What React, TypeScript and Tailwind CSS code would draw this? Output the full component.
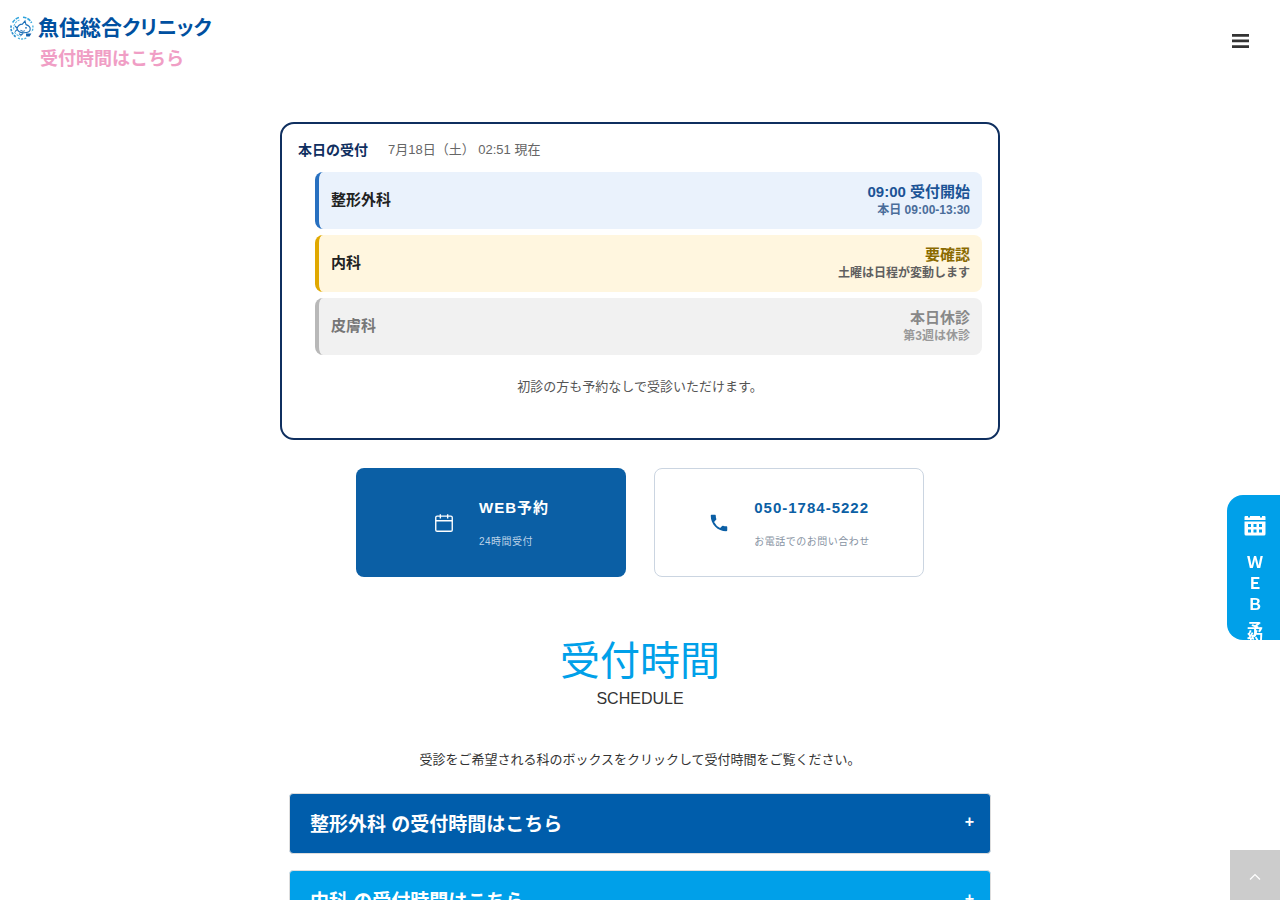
import { useState } from 'react';

type Status = 'before' | 'check' | 'closed';

interface Department {
  name: string;
  status: Status;
  label: string;
  note: string;
}

const departments: Department[] = [
  { name: '整形外科', status: 'before', label: '09:00 受付開始', note: '本日 09:00-13:30' },
  { name: '内科', status: 'check', label: '要確認', note: '土曜は日程が変動します' },
  { name: '皮膚科', status: 'closed', label: '本日休診', note: '第3週は休診' },
];

const statusStyles: Record<Status, { row: string; name: string; label: string; note: string }> = {
  before: {
    row: 'border-[#2770c0] bg-[#eaf2fc]',
    name: 'text-[#222222]',
    label: 'text-[#1c5496]',
    note: 'text-[#4a6d9a]',
  },
  check: {
    row: 'border-[#e0a800] bg-[#fff6df]',
    name: 'text-[#222222]',
    label: 'text-[#8a6a00]',
    note: 'text-[#5f5f5f]',
  },
  closed: {
    row: 'border-[#b8b8b8] bg-[#f1f1f1]',
    name: 'text-[#777777]',
    label: 'text-[#888888]',
    note: 'text-[#999999]',
  },
};

const schedules = [
  { name: '整形外科', color: 'bg-[#005dab]' },
  { name: '内科', color: 'bg-[#00a0e9]' },
];

function LogoMark() {
  return (
    <svg viewBox="0 0 24 24" className="h-6 w-6" fill="none" aria-hidden="true">
      {/* 波の輪 */}
      <path d="M2.600 6.500A11 11 0 0 1 9 1.500M13 1.200a11 11 0 0 1 8.600 5.600" stroke="#2fa3dc" strokeWidth="1.600" strokeDasharray="3.600 1" />
      <path d="M1.200 9.500a11 11 0 0 0 4.600 11.300" stroke="#2b8fce" strokeWidth="1.600" strokeDasharray="2.400 1" />
      <path d="M8 22.200a11 11 0 0 0 9-.4M22.800 9.500a11 11 0 0 1-1 6.500" stroke="#4bb3e0" strokeWidth="1.400" strokeDasharray="2 1.200" />
      <path d="M3.800 13.500A8.500 8.500 0 0 1 9.500 4M4.500 16a8.500 8.500 0 0 0 6 4.200" stroke="#5bbce6" strokeWidth="1.100" strokeDasharray="2.400 .9" />
      {/* 魚 */}
      <path d="M7 12.500c1-3 3-4.300 5.400-4.400L15 5l1 3.600c2.600.8 4.200 2.400 4.200 4.400 0 2.600-2.900 3.800-6.200 3.800-3.400 0-6.200-1.300-7-4.300Z" stroke="#1b6fb8" strokeWidth="1.100" />
      <path d="m7 12-2-2M7 13.600l-2 2M10.500 14c1.200 1.400 3 1.500 4.400.6M9 17.600l2 1.600 2.200-1.800" stroke="#1b6fb8" strokeWidth="1.100" />
      <circle cx="16" cy="11.800" r=".9" fill="#1b6fb8" />
      <path d="M16 17.600h5.400L19.600 20.400h-3.400z" fill="#1463ae" />
    </svg>
  );
}

function Header() {
  return (
    <header className="flex items-start justify-between pl-[10px] pr-[31px]">
      <div className="pt-4">
        <a href="#top" className="flex h-6 items-center gap-[4px] text-[21px] font-bold text-[#0050a0]">
          <LogoMark />
          <span className="whitespace-nowrap leading-6 [font-feature-settings:'palt']">
            魚住総合<span className="text-xl leading-6">クリニック</span>
          </span>
        </a>
        <a href="#schedule" className="ml-[30px] mt-[6px] block text-lg font-bold leading-[27px] text-[#f09ec5]">
          受付時間はこちら
        </a>
      </div>
      <button type="button" aria-label="メニュー" className="mt-[34px] text-[#333333]">
        <svg viewBox="0 0 17 14" className="h-[14px] w-[17px]" fill="currentColor">
          <path d="M0 0h17v2.700H0zM0 5.600h17v2.700H0zM0 11.300h17v2.700H0z" />
        </svg>
      </button>
    </header>
  );
}

function TodayCard() {
  return (
    <section className="rounded-[14px] border-2 border-[#0f2f5f] px-4 pb-[39px] pt-[15px]">
      <div className="flex items-center gap-5 leading-[22px]">
        <h2 className="text-sm font-bold leading-[22px] text-[#0f2f5f]">本日の受付</h2>
        <p className="text-[13px] text-[#666666]">7月18日（土） 02:51 現在</p>
      </div>
      <ul className="ml-[17px] mt-[11px] flex flex-col gap-[6px]">
        {departments.map((dept) => {
          const style = statusStyles[dept.status];
          return (
            <li
              key={dept.name}
              className={`flex items-center justify-between rounded-lg border-l-4 px-3 py-[10px] font-bold ${style.row}`}
            >
              <span className={`text-[15px] ${style.name}`}>{dept.name}</span>
              <span className="flex flex-col items-end">
                <span className={`text-[15px] leading-5 ${style.label}`}>{dept.label}</span>
                <span className={`text-xs leading-[17px] ${style.note}`}>{dept.note}</span>
              </span>
            </li>
          );
        })}
      </ul>
      <p className="mt-[20px] text-center text-[13px] leading-6 text-[#555555]">初診の方も予約なしで受診いただけます。</p>
    </section>
  );
}

function ContactButtons() {
  return (
    <div className="mt-7 flex flex-wrap justify-center gap-7">
      <a
        href="#reserve"
        className="flex h-[109px] w-[270px] items-center justify-center gap-6 rounded-lg bg-[#0b5fa5] text-white"
      >
        <svg viewBox="0 0 24 24" className="h-[22px] w-[22px]" fill="none" stroke="currentColor" strokeWidth="1.5">
          <rect x="3" y="4.5" width="18" height="16.5" rx="1.5" />
          <path d="M3 9.500h18M8 2.500V7M16 2.500V7" />
        </svg>
        <span className="flex flex-col gap-[14px]">
          <span className="text-[15px] font-bold leading-6 tracking-[1px]">WEB予約</span>
          <span className="text-[10px] leading-4 tracking-wider text-[#bcd3e8]">24時間受付</span>
        </span>
      </a>
      <a
        href="tel:050-1784-5222"
        className="flex h-[109px] w-[270px] items-center justify-center gap-6 rounded-lg border border-[#cbd5e1] bg-white text-[#0b5fa5]"
      >
        <svg viewBox="0 0 24 24" className="h-[22px] w-[22px]" fill="currentColor">
          <path d="M20 15.5c-1.25 0-2.45-.2-3.57-.57a1.02 1.02 0 0 0-1.02.24l-2.2 2.2a15.05 15.05 0 0 1-6.59-6.58l2.2-2.21c.28-.27.36-.66.25-1.01A11.36 11.36 0 0 1 8.5 4c0-.55-.45-1-1-1H4c-.55 0-1 .45-1 1 0 9.39 7.61 17 17 17 .55 0 1-.45 1-1v-3.5c0-.55-.45-1-1-1z" />
        </svg>
        <span className="flex flex-col gap-[14px]">
          <span className="text-[15px] font-bold leading-6 tracking-[1px]">050-1784-5222</span>
          <span className="text-[10px] leading-4 tracking-wider text-[#8793a3]">お電話でのお問い合わせ</span>
        </span>
      </a>
    </div>
  );
}

function Schedule() {
  const [opened, setOpened] = useState<string | null>(null);

  return (
    <section id="schedule" className="mt-[54px] px-[9px]">
      <div className="text-center">
        <h2 className="text-[40px] leading-[60px] text-[#00a0e9]">受付時間</h2>
        <p className="text-base leading-4 text-[#333333]">SCHEDULE</p>
      </div>
      <p className="mt-[41px] text-center text-[13px] leading-6 text-[#333333]">
        受診をご希望される科のボックスをクリックして受付時間をご覧ください。
      </p>
      <div className="mt-[21px] flex flex-col gap-4">
        {schedules.map((item) => (
          <button
            key={item.name}
            type="button"
            aria-expanded={opened === item.name}
            onClick={() => setOpened(opened === item.name ? null : item.name)}
            className={`flex h-[61px] items-center justify-between rounded border border-[#dddddd] pl-5 pr-4 text-left font-bold text-white ${item.color}`}
          >
            <span className="pt-[3px] text-[19px]">{item.name} の受付時間はこちら</span>
            <span className="pb-1 text-base leading-6">{opened === item.name ? '−' : '+'}</span>
          </button>
        ))}
      </div>
    </section>
  );
}

function ReserveTab() {
  return (
    <a
      href="#reserve"
      aria-label="WEB予約"
      className="fixed right-0 top-[495px] flex h-[145px] w-[53px] flex-col items-center overflow-hidden rounded-l-2xl bg-[#00a0e9] pl-[3px] pt-5 text-base font-bold text-white"
    >
      <svg viewBox="0 0 22 21" className="h-[21px] w-[22px] shrink-0" fill="currentColor">
        <path d="M1.500 1h2.500v1.500h2V1h10v1.500h2V1h2.500q1 0 1 1v3H.5V2q0-1 1-1Z" />
        <path
          fillRule="evenodd"
          d="M.5 6.500h21v12.500q0 1.500-1.500 1.500H2Q.5 20.500.5 19ZM4 9v3h3V9Zm5.500 0v3h3V9ZM15 9v3h3V9ZM4 14.500v3h3v-3Zm5.500 0v3h3v-3Zm5.500 0v3h3v-3Z"
        />
      </svg>
      <span className="mt-4 flex flex-col items-center leading-[21px]">
        <span>Ｗ</span>
        <span>Ｅ</span>
        <span>Ｂ</span>
        {/* 予約だけ詰めて重なる */}
        <span className="mt-1">予</span>
        <span className="-mt-3">約</span>
      </span>
    </a>
  );
}

export default function App() {
  return (
    <div
      id="top"
      lang="ja"
      className="h-screen overflow-y-auto bg-white font-['Liberation_Sans','Noto_Sans_CJK_JP',sans-serif] [scrollbar-width:none]"
    >
      <Header />
      <main className="mx-auto mt-[49px] max-w-[720px]">
        <TodayCard />
        <ContactButtons />
        <Schedule />
      </main>
      <ReserveTab />
      <a
        href="#top"
        aria-label="ページの先頭へ"
        className="fixed bottom-0 right-0 flex h-[50px] w-[50px] items-center justify-center bg-[#cccccc] text-white"
      >
        <svg viewBox="0 0 12 8" className="mt-1 h-2 w-3" fill="none" stroke="currentColor" strokeWidth="1.2">
          <path d="M1 6.500 6 1.500l5 5" />
        </svg>
      </a>
    </div>
  );
}
